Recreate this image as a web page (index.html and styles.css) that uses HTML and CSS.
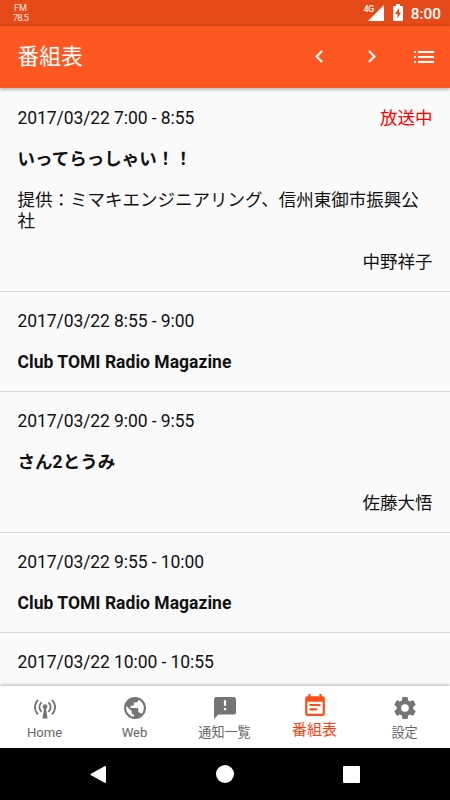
FILE: index.html
```html
<!DOCTYPE html>
<html lang="ja">
<head>
<meta charset="utf-8">
<title>番組表</title>
<link rel="stylesheet" href="styles.css">
</head>
<body>
<div class="screen">
  <div class="status">
    <div class="fm"><span class="fm-top">FM</span><span class="fm-num">78.5</span></div>
    <div class="status-right">
      <span class="net">4G</span>
      <svg class="signal" viewBox="0 0 16 16"><path d="M16 0V16H0Z"/></svg>
      <svg class="battery" viewBox="0 0 10 17"><path fill-rule="evenodd" d="M3 0h4v2h2q1 0 1 1v13q0 1-1 1H1q-1 0-1-1V3q0-1 1-1h2ZM6 4L2 10h2.5v4.5L8 8.5H6Z"/></svg>
      <span class="clock">8:00</span>
    </div>
  </div>
  <header class="appbar">
    <h1>番組表</h1>
    <svg class="chev" viewBox="0 0 8 13"><path d="M7 .9L1.6 6.5L7 12.1"/></svg>
    <svg class="chev next" viewBox="0 0 8 13"><path d="M1 .9L6.4 6.5L1 12.1"/></svg>
    <svg class="menu" viewBox="0 0 20 12"><path d="M0 0h2v2H0zM4 0h16v2H4zM0 5h2v2H0zM4 5h16v2H4zM0 10h2v2H0zM4 10h16v2H4z"/></svg>
  </header>
  <main class="list">
    <article class="item">
      <div class="when"><span>2017/03/22 7:00 - 8:55</span><span class="live">放送中</span></div>
      <h2>いってらっしゃい！！</h2>
      <p>提供：ミマキエンジニアリング、信州東御市振興公社</p>
      <div class="host">中野祥子</div>
    </article>
    <article class="item">
      <div class="when">2017/03/22 8:55 - 9:00</div>
      <h2>Club TOMI Radio Magazine</h2>
    </article>
    <article class="item">
      <div class="when">2017/03/22 9:00 - 9:55</div>
      <h2>さん2とうみ</h2>
      <div class="host">佐藤大悟</div>
    </article>
    <article class="item">
      <div class="when">2017/03/22 9:55 - 10:00</div>
      <h2>Club TOMI Radio Magazine</h2>
    </article>
    <article class="item">
      <div class="when">2017/03/22 10:00 - 10:55</div>
    </article>
  </main>
  <nav class="tabs">
    <div class="tab">
      <svg viewBox="0 0 24 24"><g class="waves"><path d="M4.3 3.2Q-2.3 11 4.3 19M8.2 5.9Q3.4 11 8.2 16.2M19.7 3.2Q26.3 11 19.7 19M15.8 5.9Q20.6 11 15.8 16.2"/></g><circle cx="12" cy="10.5" r="2.6"/><path d="M11 12h2L14.8 23.5h-5.6Z"/></svg>
      <span>Home</span>
    </div>
    <div class="tab">
      <svg viewBox="0 0 24 24"><path d="M12 0a12 12 0 1 0 0 24a12 12 0 0 0 0-24zm-1.2 21.5A9.6 9.6 0 0 1 2.65 9.85L8.4 15.6v1.2a2.4 2.4 0 0 0 2.4 2.4zm8.28-3.05a2.4 2.4 0 0 0-2.28-1.65h-1.2v-3.6a1.2 1.2 0 0 0-1.2-1.2H7.2V9.6h2.4a1.2 1.2 0 0 0 1.2-1.2V6h2.4a2.4 2.4 0 0 0 2.4-2.4v-.5a9.6 9.6 0 0 1 3.48 15.35z"/></svg>
      <span>Web</span>
    </div>
    <div class="tab">
      <svg viewBox="2 2 20 20"><path d="M20 2H4a2 2 0 0 0-1.99 2L2 22l4-4h14a2 2 0 0 0 2-2V4a2 2 0 0 0-2-2zm-7 12h-2v-2h2zm0-4h-2V5h2z"/></svg>
      <span>通知一覧</span>
    </div>
    <div class="tab active">
      <svg viewBox="2 1 20 20"><path d="M17 10H7v2h10zm2-7h-1V1h-2v2H8V1H6v2H5a2 2 0 0 0-1.99 2L3 19a2 2 0 0 0 2 2h14a2 2 0 0 0 2-2V5a2 2 0 0 0-2-2zm0 16H5V8h14zm-5-5H7v2h7z"/></svg>
      <span>番組表</span>
    </div>
    <div class="tab">
      <svg viewBox="2 2 20 20"><path d="M19.43 12.98c.04-.32.07-.64.07-.98s-.03-.66-.07-.98l2.11-1.65c.19-.15.24-.42.12-.64l-2-3.46c-.12-.22-.39-.3-.61-.22l-2.49 1c-.52-.4-1.08-.73-1.69-.98l-.38-2.65A.488.488 0 0 0 14 2h-4c-.25 0-.46.18-.49.42l-.38 2.65c-.61.25-1.17.59-1.69.98l-2.49-1c-.23-.09-.49 0-.61.22l-2 3.46c-.13.22-.07.49.12.64l2.11 1.65c-.04.32-.07.65-.07.98s.03.66.07.98l-2.11 1.65c-.19.15-.24.42-.12.64l2 3.46c.12.22.39.3.61.22l2.49-1c.52.4 1.08.73 1.69.98l.38 2.65c.03.24.24.42.49.42h4c.25 0 .46-.18.49-.42l.38-2.65c.61-.25 1.17-.59 1.69-.98l2.49 1c.23.09.49 0 .61-.22l2-3.46c.12-.22.07-.49-.12-.64zM12 15.5a3.5 3.5 0 1 1 0-7a3.5 3.5 0 0 1 0 7z"/></svg>
      <span>設定</span>
    </div>
  </nav>
  <footer class="system">
    <svg class="back" viewBox="0 0 17 18"><path d="M15 1.5v15L1.5 9Z"/></svg>
    <div class="home"></div>
    <div class="recent"></div>
  </footer>
</div>
</body>
</html>
```

FILE: styles.css
```css
* { box-sizing: border-box; }
body {
  margin: 0;
  font-family: Roboto, "Noto Sans CJK JP", sans-serif;
  color: #111;
}
h1, h2, p { margin: 0; }
svg { display: block; flex: none; }
.screen {
  width: 450px;
  height: 800px;
  display: flex;
  flex-direction: column;
  overflow: hidden;
  background: #fafafa;
}
.status {
  flex: none;
  height: 26px;
  background: #e64a19;
  color: #fff;
  display: flex;
  justify-content: space-between;
  padding: 0 9px 0 12px;
}
.fm {
  width: 17px;
  padding-top: 4px;
  display: flex;
  flex-direction: column;
  align-items: center;
  font-size: 9.5px;
  line-height: 9px;
  color: #ffe9e2;
}
.fm-top { font-size: 9px; }
.fm-num { letter-spacing: -0.8px; }
.status-right { display: flex; align-items: flex-start; }
.signal, .battery { fill: #fff; }
.net {
  font-size: 8.5px;
  line-height: 10px;
  font-weight: 500;
  letter-spacing: -0.4px;
  margin: 4px -6px 0 0;
}
.signal { width: 16px; height: 16px; margin-top: 5px; }
.battery { width: 10px; height: 17px; margin: 4px 0 0 9px; }
.clock {
  font-size: 15.4px;
  font-weight: 500;
  line-height: 18px;
  margin: 5px 0 0 8px;
}
.appbar {
  flex: none;
  height: 61.5px;
  background: #ff5722;
  color: #fff;
  display: flex;
  align-items: center;
  padding: 0 16px 0 17.5px;
  box-shadow: 0 1px 4px rgba(0, 0, 0, .38);
  position: relative;
}
.appbar h1 {
  flex: 1;
  font-size: 21.8px;
  line-height: 26px;
  font-weight: 400;
  padding-top: 1px;
}
.chev {
  width: 8px;
  height: 13px;
  fill: none;
  stroke: #fff;
  stroke-width: 2.1;
}
.next { margin: 0 38.5px 0 45px; }
.menu { width: 20px; height: 12px; fill: #fff; }
.list {
  flex: 1;
  min-height: 0;
  overflow: hidden;
  font-size: 17.5px;
  line-height: 21px;
  padding-top: 1.5px;
}
.item {
  display: flex;
  flex-direction: column;
  gap: 20px;
  padding: 19px 17.5px 18px;
  border-bottom: 1px solid #dadada;
}
.item h2, .item p, .host, .when { font-size: 17.5px; }
.item h2 { font-weight: 700; letter-spacing: .03px; }
.when {
  display: flex;
  justify-content: space-between;
  height: 21px;
  letter-spacing: -.08px;
}
.live { color: #f00; letter-spacing: 0; }
.host { text-align: right; }
.tabs {
  flex: none;
  height: 62px;
  background: #fff;
  display: grid;
  grid-template-columns: repeat(5, 1fr);
  box-shadow: 0 -1px 3px rgba(0, 0, 0, .28);
  position: relative;
  color: #666;
  fill: #757575;
}
.tab {
  display: flex;
  flex-direction: column;
  align-items: center;
  padding: 11px 1px 0 0;
  font-size: 13.1px;
  line-height: 16px;
}
.tab svg { width: 22px; height: 22px; margin-bottom: 6px; }
.waves { fill: none; stroke: #757575; stroke-width: 2; }
.tab.active {
  color: #ff3d0c;
  fill: #ff4f17;
  font-size: 15px;
  padding-top: 8px;
}
.system {
  flex: none;
  height: 52px;
  background: #000;
  display: flex;
  align-items: center;
  justify-content: space-between;
  padding: 0 90px;
}
.back { width: 17px; height: 19px; fill: #fff; stroke: #fff; stroke-width: 2; stroke-linejoin: round; }
.home { width: 18px; height: 18px; border-radius: 50%; background: #fff; }
.recent { width: 17px; height: 17px; border-radius: 1px; background: #fff; }
```
